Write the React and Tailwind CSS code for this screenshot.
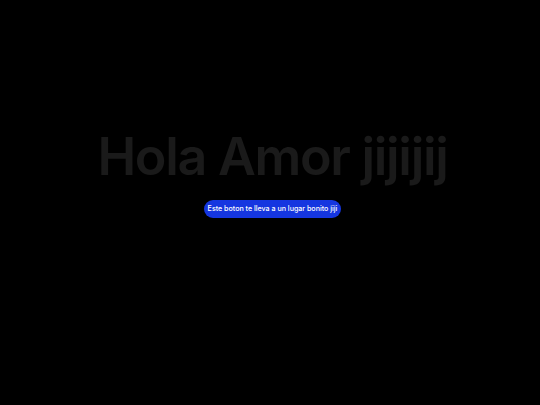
export default function App() {
  return (
    <div className="min-h-screen w-full bg-black flex flex-col items-center pt-[131px] pl-[5px] font-['Inter',sans-serif]">
      <h1 className="text-[52px] leading-none font-semibold text-[#1a1a1a] tracking-tight">
        Hola Amor jijijij
      </h1>
      <button className="mt-[17px] h-[18px] px-[4px] rounded-full bg-[#1536e0] text-white text-[7.1px] font-medium leading-none">
        Este boton te lleva a un lugar bonito jiji
      </button>
    </div>
  );
}
